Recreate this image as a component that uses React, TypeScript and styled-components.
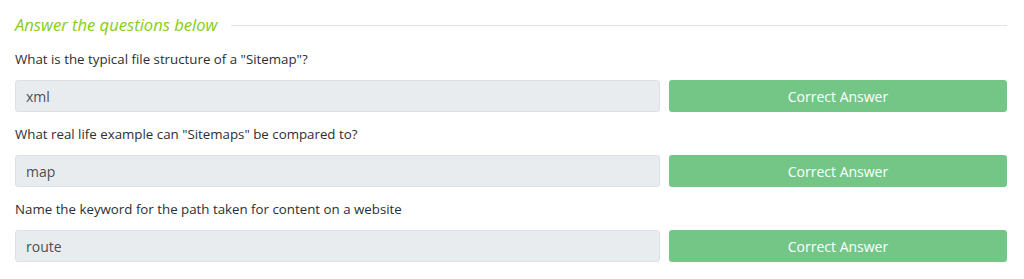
import React from 'react';
import styled, { createGlobalStyle } from 'styled-components';

const GlobalStyle = createGlobalStyle`
    body {
        margin: 0;
        background: #fff;
        font-family: "Open Sans", "Noto Sans", sans-serif;
    }
`;

const Wrapper = styled.div`
    padding: 14px 17px 0 15px;
`;

const HeadingRow = styled.div`
    display: flex;
    align-items: center;
    gap: 14px;
    margin-bottom: 13px;
`;

const Heading = styled.h4`
    margin: 0;
    font-size: 16.6px;
    line-height: 22px;
    font-style: italic;
    font-weight: 400;
    color: #88cc14;
    white-space: nowrap;
`;

const Rule = styled.div`
    flex: 1;
    height: 1px;
    background: #dfe1e3;
`;

const Task = styled.div`
    margin-bottom: 12px;
`;

const Question = styled.p`
    margin: 0 0 11px;
    font-size: 13.3px;
    line-height: 20px;
    color: #2b2f33;
`;

const AnswerRow = styled.div`
    display: grid;
    grid-template-columns: 645fr 338fr;
    gap: 9px;
`;

const AnswerInput = styled.div`
    box-sizing: border-box;
    height: 32px;
    padding: 0 10px;
    display: flex;
    align-items: center;
    background: #e9ecef;
    border: 1px solid #dde1e5;
    border-radius: 3px;
    font-size: 14px;
    color: #4a5056;
`;

const SubmitButton = styled.button`
    box-sizing: border-box;
    height: 32px;
    border: none;
    border-radius: 3px;
    background: #74c686;
    color: #fff;
    font-family: inherit;
    font-size: 14px;
    cursor: pointer;
`;

const tasks = [
    { question: 'What is the typical file structure of a "Sitemap"?', answer: 'xml' },
    { question: 'What real life example can "Sitemaps" be compared to?', answer: 'map' },
    { question: 'Name the keyword for the path taken for content on a website', answer: 'route' },
];

const App = () => (
    <Wrapper>
        <GlobalStyle />
        <HeadingRow>
            <Heading>Answer the questions below</Heading>
            <Rule />
        </HeadingRow>
        {tasks.map((task, index) => (
            <Task key={index}>
                <Question>{task.question}</Question>
                <AnswerRow>
                    <AnswerInput>{task.answer}</AnswerInput>
                    <SubmitButton>Correct Answer</SubmitButton>
                </AnswerRow>
            </Task>
        ))}
    </Wrapper>
);

export default App;
